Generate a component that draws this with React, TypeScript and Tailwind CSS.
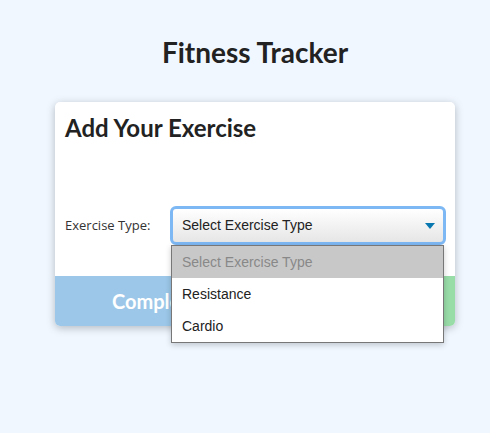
import React, { useState } from "react";

const options = ["Select Exercise Type", "Resistance", "Cardio"];

const App = () => {
  const [selected] = useState(0);
  const [open] = useState(true); // dropdown shown open like the screenshot

  return (
    <div className="min-h-screen w-full bg-[#f0f7ff] pl-[20px] pt-[33px]" style={{ fontFamily: "Lato, 'Open Sans', sans-serif" }}>
      <h1 className="text-center text-[28px] font-bold leading-[38px] text-[#222]">Fitness Tracker</h1>
      <div className="mx-auto mt-[31px] w-[400px] rounded-[5px] bg-white shadow-[0_2px_8px_rgba(0,0,0,0.25)]">
        <div className="pl-[10px] pr-[9px] pt-[10px]">
          <h2 className="text-[24px] font-bold leading-[32px] text-[#222]">Add Your Exercise</h2>
          <div className="mt-[62px] flex items-center">
            <label className="w-[105px] text-[13px] text-[#333]" style={{ fontFamily: "'Open Sans', sans-serif" }}>
              Exercise Type:
            </label>
            <div className="relative flex-1">
              <div className="flex h-[39px] items-center justify-between rounded-[6px] border-[3px] border-[#7db8f4] bg-gradient-to-b from-white to-[#e6e6e6] pl-[9px] pr-[8px]">
                <span className="text-[14px] text-[#222]" style={{ fontFamily: "'Liberation Sans', Arial, sans-serif" }}>
                  {options[selected]}
                </span>
                <svg width="10" height="6" viewBox="0 0 10 6">
                  <path d="M0 0 H10 L5 6 Z" fill="#0a78b0" />
                </svg>
              </div>
              {open && (
                <ul
                  className="absolute left-[1px] top-[39px] z-10 w-[273px] border border-[#777] bg-white shadow-[0_2px_6px_rgba(0,0,0,0.2)]"
                  style={{ fontFamily: "'Liberation Sans', Arial, sans-serif" }}
                >
                  {options.map((opt, i) => (
                    <li
                      key={opt}
                      className={`flex h-[32px] items-center pl-[10px] text-[14px] ${
                        i === 0 ? "bg-[#c8c8c8] text-[#888]" : "text-[#222]"
                      }`}
                    >
                      {opt}
                    </li>
                  ))}
                </ul>
              )}
            </div>
          </div>
        </div>
        <div className="mt-[31px] flex h-[50px] overflow-hidden rounded-b-[5px]">
          <button className="flex-1 bg-[#9cc7e8] text-[20px] font-bold text-white">Complete</button>
          <button className="flex-1 bg-[#98dca8] text-[20px] font-bold text-white">Add Exercise</button>
        </div>
      </div>
    </div>
  );
};

export default App;
